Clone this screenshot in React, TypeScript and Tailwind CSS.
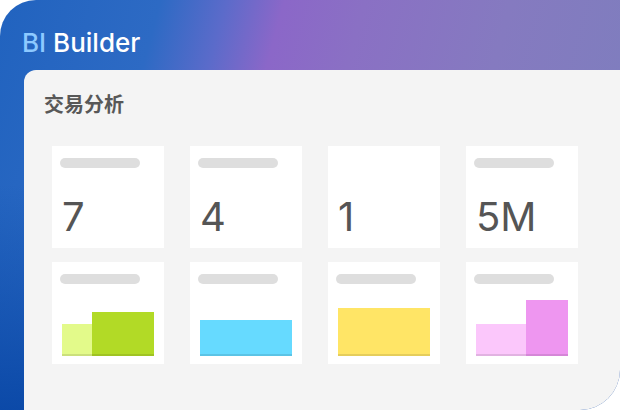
import React from "react";

const stats = [
  { value: "7", bar: true },
  { value: "4", bar: true },
  { value: "1", bar: false },
  { value: "5M", bar: true },
];

function Placeholder() {
  return <div className="h-[10px] w-[80px] rounded-full bg-[#dedede]" />;
}

function StatCard({ value, bar }: { value: string; bar: boolean }) {
  return (
    <div className="flex h-[102px] flex-col justify-between bg-white pl-[8px] pt-[12px] pb-[11px]">
      {bar ? <Placeholder /> : <div className="h-[10px]" />}
      <div
        className="pl-[2px] text-[40px] leading-[40px] text-[#555555]"
        style={{ fontFamily: "Inter, 'Noto Sans', sans-serif" }}
      >
        {value}
      </div>
    </div>
  );
}

function ChartCard({ bars }: { bars: { w: number; h: number; c: string }[] }) {
  return (
    <div className="flex h-[102px] flex-col justify-between bg-white pl-[8px] pt-[12px] pb-[8px]">
      <Placeholder />
      <div className="ml-[2px] flex w-[92px] flex-col">
        <div className="flex items-end">
          {bars.map((b, i) => (
            <div key={i} style={{ width: b.w, height: b.h, background: b.c }} />
          ))}
        </div>
        <div className="-mt-[2px] h-[2px] bg-black/10" />
      </div>
    </div>
  );
}

export default function App() {
  return (
    <div
      className="relative flex h-[410px] w-[620px] flex-col overflow-hidden rounded-tl-[36px] rounded-br-[40px]"
      style={{
        background:
          "linear-gradient(180deg, rgba(10,70,165,0) 45%, rgba(8,70,165,0.9) 100%), linear-gradient(150deg, rgba(255,255,255,0) 63%, rgba(255,255,255,0.06) 63.5%, rgba(255,255,255,0.06) 100%), linear-gradient(105deg, #2163bf 0%, #2d6ac4 22%, #5b6bca 31%, #8b67c8 39%, #8a70c4 50%, #857ac0 70%, #7c7fbd 100%)",
      }}
    >
      <div className="h-[70px] pl-[22px] pt-[30px]">
        <div
          className="text-[26px] font-medium leading-[26px]"
          style={{ fontFamily: "Inter, 'Noto Sans', sans-serif" }}
        >
          <span className="text-[#8dc9ff]">BI</span>
          <span className="text-white"> Builder</span>
        </div>
      </div>
      <div className="ml-[24px] flex-1 rounded-tl-[12px] bg-[#f4f4f4]">
        <div
          className="pl-[20px] pt-[22px] text-[20px] font-bold leading-[24px] text-[#585858]"
          style={{ fontFamily: "'Noto Sans CJK SC', sans-serif" }}
        >
          交易分析
        </div>
        <div className="mt-[30px] grid grid-cols-[112px_112px_112px_112px] gap-x-[26px] gap-y-[14px] pl-[28px]">
          {stats.map((s, i) => (
            <StatCard key={i} value={s.value} bar={s.bar} />
          ))}
          <ChartCard
            bars={[
              { w: 30, h: 32, c: "#e3fa8a" },
              { w: 62, h: 44, c: "#b2da26" },
            ]}
          />
          <ChartCard bars={[{ w: 92, h: 36, c: "#66daff" }]} />
          <ChartCard bars={[{ w: 92, h: 48, c: "#ffe566" }]} />
          <ChartCard
            bars={[
              { w: 50, h: 32, c: "#fbc7fb" },
              { w: 42, h: 56, c: "#ee96f0" },
            ]}
          />
        </div>
      </div>
    </div>
  );
}
